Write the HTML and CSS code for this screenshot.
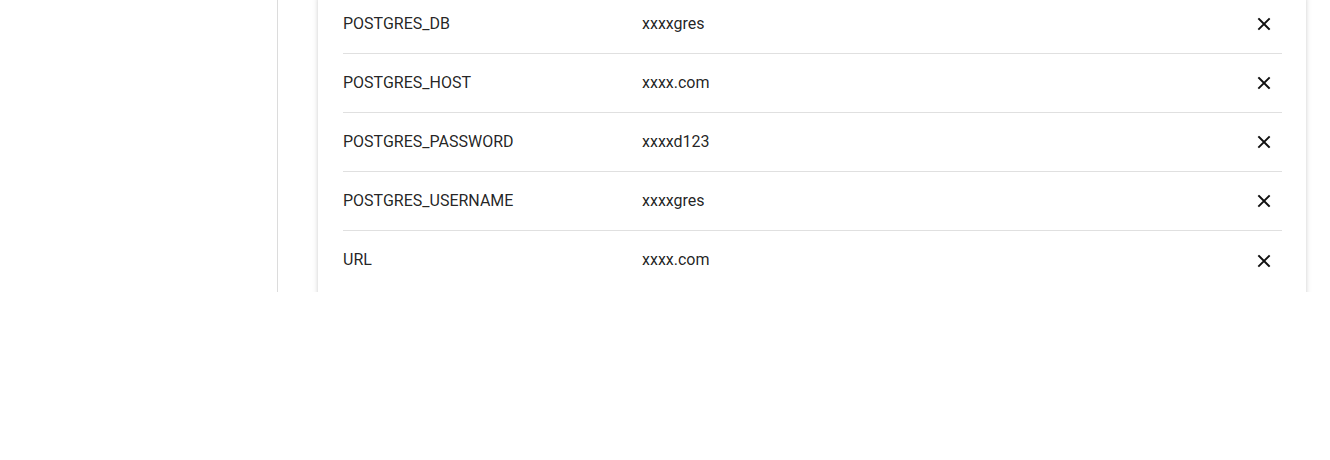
FILE: index.html
```html
<!DOCTYPE html>
<html>
<head>
<meta charset="utf-8">
<link rel="stylesheet" href="styles.css">
</head>
<body>
<div class="layout">
  <aside class="sidebar"></aside>
  <main class="main">
    <div class="card">
      <div class="row"><span class="key">POSTGRES_DB</span><span class="val">xxxxgres</span><button class="del"><svg viewBox="0 0 24 24" width="20" height="20"><path d="M6 6L18 18M18 6L6 18"/></svg></button></div>
      <div class="row"><span class="key">POSTGRES_HOST</span><span class="val">xxxx.com</span><button class="del"><svg viewBox="0 0 24 24" width="20" height="20"><path d="M6 6L18 18M18 6L6 18"/></svg></button></div>
      <div class="row"><span class="key">POSTGRES_PASSWORD</span><span class="val">xxxxd123</span><button class="del"><svg viewBox="0 0 24 24" width="20" height="20"><path d="M6 6L18 18M18 6L6 18"/></svg></button></div>
      <div class="row"><span class="key">POSTGRES_USERNAME</span><span class="val">xxxxgres</span><button class="del"><svg viewBox="0 0 24 24" width="20" height="20"><path d="M6 6L18 18M18 6L6 18"/></svg></button></div>
      <div class="row"><span class="key">URL</span><span class="val">xxxx.com</span><button class="del"><svg viewBox="0 0 24 24" width="20" height="20"><path d="M6 6L18 18M18 6L6 18"/></svg></button></div>
    </div>
  </main>
</div>
</body>
</html>
```
FILE: styles.css
```css
html, body {
  margin: 0;
  padding: 0;
  background: #fff;
}
body {
  font-family: Roboto, "Liberation Sans", sans-serif;
  font-size: 16px;
  color: rgba(0, 0, 0, 0.87);
}
.layout {
  display: flex;
  height: 292px;
  overflow: hidden;
}
.sidebar {
  width: 277px;
  flex: none;
  border-right: 1px solid #dcdcdc;
}
.main {
  flex: 1;
  padding: 0 24px 0 40px;
}
.card {
  width: 939px;
  margin-top: -5px;
  padding: 0 24px 10px 25px;
  background: #fff;
  box-shadow: 0 2px 6px rgba(0, 0, 0, 0.14), 0 1px 3px rgba(0, 0, 0, 0.08);
}
.row {
  box-sizing: border-box;
  display: flex;
  align-items: center;
  height: 59px;
  padding-bottom: 2px;
  border-bottom: 1px solid #e0e0e0;
}
.row:last-child {
  border-bottom: none;
}
.key {
  width: 299px;
  flex: none;
}
.val {
  flex: 1;
}
.del {
  width: 20px;
  height: 20px;
  margin: 2px 8px 0 0;
  padding: 0;
  border: none;
  background: none;
  display: flex;
}
.del svg {
  fill: none;
  stroke: #111;
  stroke-width: 2.3;
  stroke-linecap: square;
}
```
